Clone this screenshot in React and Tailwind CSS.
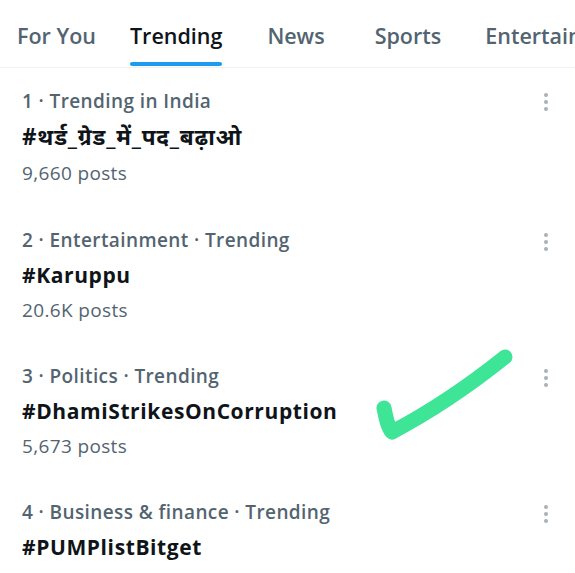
import React from 'react';

const tabs = [
  { label: 'For You', ml: 'ml-[17px]' },
  { label: 'Trending', ml: 'ml-[34px]', active: true },
  { label: 'News', ml: 'ml-[45px]' },
  { label: 'Sports', ml: 'ml-[50px]' },
  { label: 'Entertainment', ml: 'ml-[44px]' },
];

const trends = [
  { meta: '1 · Trending in India', tag: '#थर्ड_ग्रेड_में_पद_बढ़ाओ', posts: '9,660 posts', first: true },
  { meta: '2 · Entertainment · Trending', tag: '#Karuppu', posts: '20.6K posts' },
  { meta: '3 · Politics · Trending', tag: '#DhamiStrikesOnCorruption', posts: '5,673 posts' },
  { meta: '4 · Business & finance · Trending', tag: '#PUMPlistBitget', posts: '' },
];

const Dots = () => (
  <svg width="6" height="20" viewBox="0 0 6 20" className="text-[#a9b1b8]">
    <circle cx="3" cy="3" r="2" fill="currentColor" />
    <circle cx="3" cy="10" r="2" fill="currentColor" />
    <circle cx="3" cy="17" r="2" fill="currentColor" />
  </svg>
);

const App = () => {
  return (
    <div
      className="relative w-[575px] h-[573px] overflow-hidden bg-white"
      style={{ fontFamily: '"Open Sans", "Noto Sans", "Noto Sans Devanagari", sans-serif' }}
    >
      <div className="flex h-[68px] pt-[6px] border-b border-[#eff3f4] whitespace-nowrap">
        {tabs.map((t) => (
          <div key={t.label} className={`${t.ml} relative flex items-center h-full shrink-0`}>
            <span
              className={`text-[21.5px] font-semibold ${t.active ? 'text-[#0f1419]' : 'text-[#536471]'}`}
            >
              {t.label}
            </span>
            {t.active && (
              <div className="absolute bottom-[1px] left-0 right-0 h-[4px] rounded-full bg-[#1d9bf0]" />
            )}
          </div>
        ))}
      </div>

      {trends.map((t) => (
        <div
          key={t.tag}
          className={`relative pl-[22px] pt-[15px] ${t.first ? 'h-[140px] leading-[36px]' : 'h-[136px] leading-[35px]'}`}
        >
          <div className="text-[19px] tracking-[0.4px] font-semibold text-[#536471]">{t.meta}</div>
          <div
            className={`font-bold text-[#0f1419] ${t.first ? 'text-[22.5px] tracking-[0.8px]' : 'text-[21px] tracking-[0.6px]'}`}
          >
            {t.tag}
          </div>
          <div className="text-[19px] tracking-[0.35px] text-[#536471]">{t.posts}</div>
          <div className="absolute right-[26px] top-[24px]">
            <Dots />
          </div>
        </div>
      ))}

      <svg className="absolute left-0 top-0 pointer-events-none" width="575" height="573">
        <path
          d="M384 408 C386 418 388 428 392 432 C430 412 470 385 505 357"
          fill="none"
          stroke="#3ee597"
          strokeWidth="15"
          strokeLinecap="round"
          strokeLinejoin="round"
        />
      </svg>
    </div>
  );
};

export default App;
